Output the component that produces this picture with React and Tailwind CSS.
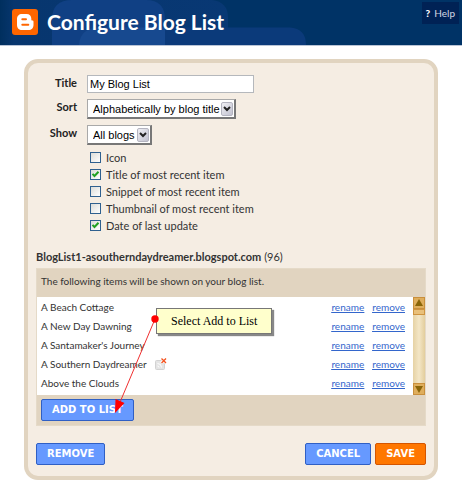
import React, { useState } from 'react';

const displayOptions = [
    { id: 'icon', label: 'Icon', checked: false },
    { id: 'title', label: 'Title of most recent item', checked: true },
    { id: 'snippet', label: 'Snippet of most recent item', checked: false },
    { id: 'thumbnail', label: 'Thumbnail of most recent item', checked: false },
    { id: 'date', label: 'Date of last update', checked: true },
];

const blogs = [
    { name: 'A Beach Cottage' },
    { name: 'A New Day Dawning' },
    { name: "A Santamaker's Journey" },
    { name: 'A Southern Daydreamer', noFeed: true },
    { name: 'Above the Clouds' },
];

const BloggerLogo = () => (
    <svg viewBox="0 0 26 26" className="size-[26px] shrink-0" aria-hidden="true">
        <rect width="26" height="26" rx="3" fill="#ff6600" />
        <path
            d="M10 5h4.500c3 0 4.800 2 4.800 4.600v.7c0 .8.300 1.200 1 1.200.9 0 1.200.4 1.200 1.200v3.300c0 3-2 5-5 5H10c-3 0-5-2-5-5v-6c0-3 2-5 5-5z"
            fill="#fff"
        />
        <path d="M10.300 10.200h3.700M10.300 15.800h6" stroke="#ff6600" strokeWidth="2" strokeLinecap="round" />
    </svg>
);

const HeaderShapes = () => (
    <svg className="absolute inset-0 h-full w-[310px]" viewBox="0 0 310 46" preserveAspectRatio="none" aria-hidden="true">
        <defs>
            <linearGradient id="edge">
                <stop offset="0" stopColor="#002f5e" />
                <stop offset="0.06" stopColor="#07366e" />
                <stop offset="1" stopColor="#083874" />
            </linearGradient>
        </defs>
        <path d="M0 0H212Q228 2 228 18V46H0z" fill="url(#edge)" />
        <path d="M165 28H290Q306 29 306 46H165z" fill="#0b3a7a" />
        <path d="M52 46V20Q52 0 72 0H146Q165 0 165 20V46z" fill="#104084" />
        <path d="M79 46Q80 28 100 28H165V46z" fill="#17498f" />
    </svg>
);

const SelectBox = ({ id, className, children }) => (
    <span className="relative inline-flex justify-self-start">
        <select
            id={id}
            className={`h-5 appearance-none border border-t-[#a9a9a9] border-l-[#a9a9a9] border-r-2 border-b-2 border-r-[#777] border-b-[#777] bg-white pl-[5px] text-[11px] leading-4 text-black ${className}`}
        >
            {children}
        </select>
        <span className="pointer-events-none absolute top-[3px] right-[3px] flex h-3.5 w-3 items-center justify-center rounded-xs border border-[#b4b4c0] bg-linear-to-br from-[#f0f0f4] to-[#c2c2d0]">
            <svg viewBox="0 0 8 6" className="h-[6px] w-2" aria-hidden="true">
                <path d="M1 1l3 3 3-3" fill="none" stroke="#222" strokeWidth="2" />
            </svg>
        </span>
    </span>
);

const CheckOption = ({ option }) => {
    const [checked, setChecked] = useState(option.checked);

    return (
        <div className="flex h-[17px] items-center gap-[5px]">
            <span className="relative flex">
                <input
                    id={option.id}
                    type="checkbox"
                    checked={checked}
                    onChange={() => setChecked(!checked)}
                    className="size-[11px] appearance-none border border-[#2f608f] bg-linear-to-br from-[#dcdcd8] to-white"
                />
                {checked && (
                    <svg viewBox="0 0 11 11" className="pointer-events-none absolute inset-0 size-[11px]" aria-hidden="true">
                        <path d="M2.500 4.800l2 2.200 4-4.200" fill="none" stroke="#21a121" strokeWidth="2" />
                    </svg>
                )}
            </span>
            <label htmlFor={option.id} className="text-[11px]">{option.label}</label>
        </div>
    );
};

const NoFeedIcon = () => (
    <svg viewBox="0 0 12 12" className="size-3" role="img" aria-label="No feed">
        <rect x="0.500" y="2.500" width="9" height="9" rx="1" fill="#e4e4e4" stroke="#d2d2d2" />
        <path d="M2.500 5.500a4 4 0 0 1 4 4M2.500 8a1.500 1.500 0 0 1 1.500 1.500" fill="none" stroke="#fff" />
        <path d="M6 0l5 5M11 0l-5 5" stroke="#fff" strokeWidth="2.500" />
        <path d="M6.500 .5l4.500 4.500M11 .5L6.500 5" stroke="#f4511e" strokeWidth="1.300" />
    </svg>
);

// Wooden scroll bar next to the blog rows
const ScrollBar = () => (
    <div className="flex w-3 shrink-0 flex-col bg-linear-to-r from-[#e6d2a4] via-[#f3e6c6] to-[#e3cd9c]" aria-hidden="true">
        <svg viewBox="0 0 12 18" className="h-[18px] w-3">
            <rect x="0.500" y="0.500" width="11" height="11" fill="#dfae5c" stroke="#c98f3c" />
            <path d="M6 2l4 7H2z" fill="#8a6508" />
            <rect x="0.500" y="12.500" width="11" height="5" fill="#e9c07a" stroke="#cf9440" />
        </svg>
        <div className="grow" />
        <svg viewBox="0 0 12 12" className="size-3">
            <rect x="0.500" y="0.500" width="11" height="11" fill="#dfae5c" stroke="#c98f3c" />
            <path d="M6 10L2 3h8z" fill="#8a6508" />
        </svg>
    </div>
);

const Button = ({ className, children }) => (
    <button
        type="button"
        className={`h-[22px] rounded-xs border px-2.5 font-['DejaVu_Sans',sans-serif] text-[10px] leading-4 font-bold text-white ${className}`}
    >
        {children}
    </button>
);

const blue = 'border-[#2f5fc4] bg-[#6699ff]';
const orange = 'border-[#d45500] bg-[#ff7700]';

const App = () => {
    const [title, setTitle] = useState('My Blog List');

    return (
        <div className="bg-white font-['Lato',sans-serif] text-[10px] leading-4 text-[#333]">
            <header className="relative flex h-[46px] items-start justify-between border-b border-[#b9c4d6] bg-[#003366]">
                <HeaderShapes />
                <div className="relative flex items-center gap-[9px] pt-2 pl-3">
                    <BloggerLogo />
                    <h1 className="text-[21px] leading-7 font-bold text-white">Configure Blog List</h1>
                </div>
                <a href="#help" className="relative mt-0.5 mr-[3px] flex h-[22px] items-center gap-1 bg-[#002255] px-1 text-[#d4d8e4]">
                    <span className="font-black text-white">?</span>
                    Help
                </a>
            </header>

            <main className="mx-6 mt-[13px] rounded-[14px] border-4 border-[#e1d4c0] bg-[#f5ede3] px-2 pt-3 pb-[11px]">
                <form>
                    <div className="grid grid-cols-[41px_1fr] items-start gap-x-2.5 gap-y-1.5">
                        <label htmlFor="list-title" className="text-right text-[11px] font-bold text-[#222]">Title</label>
                        <input
                            id="list-title"
                            type="text"
                            value={title}
                            onChange={(e) => setTitle(e.target.value)}
                            className="h-[18px] w-[167px] border border-[#b5b8bc] bg-white px-0.5 font-['Liberation_Sans',sans-serif] text-[11px] leading-4 text-black"
                        />
                        <label htmlFor="sort" className="text-right text-[11px] font-bold text-[#222]">Sort</label>
                        <SelectBox id="sort" className="w-[149px] font-['Liberation_Sans',sans-serif]">
                            <option>Alphabetically by blog title</option>
                            <option>Most recently updated</option>
                        </SelectBox>
                        <label htmlFor="show" className="text-right text-[11px] font-bold text-[#222]">Show</label>
                        <SelectBox id="show" className="w-[65px] font-['Liberation_Sans',sans-serif]">
                            <option>All blogs</option>
                            <option>5 blogs</option>
                            <option>10 blogs</option>
                        </SelectBox>
                    </div>

                    <div className="mt-1 ml-[54px]">
                        {displayOptions.map((option) => (
                            <CheckOption key={option.id} option={option} />
                        ))}
                    </div>

                    <h2 className="mt-[15px] mb-[3px] text-[11px]">
                        <span className="font-bold">BlogList1-asoutherndaydreamer.blogspot.com</span> (96)
                    </h2>

                    <section className="relative border border-[#e5dac8] bg-[#e1d4c0]">
                        <p className="px-1 pt-1 pb-2">The following items will be shown on your blog list.</p>
                        <div className="flex bg-white">
                            <ul className="grow pr-2 pl-1">
                                {blogs.map((blog) => (
                                    <li key={blog.name} className="flex h-[19px] items-center justify-between last:mb-[3px]">
                                        <span className="flex items-center gap-2">
                                            {blog.name}
                                            {blog.noFeed && <NoFeedIcon />}
                                        </span>
                                        <span className="flex gap-2 text-[#3366cc] underline">
                                            <a href="#rename">rename</a>
                                            <a href="#remove">remove</a>
                                        </span>
                                    </li>
                                ))}
                            </ul>
                            <ScrollBar />
                        </div>
                        <div className="px-1 py-1">
                            <Button className={blue}>ADD TO LIST</Button>
                        </div>

                        {/* Callout pointing at the add button */}
                        <div className="absolute top-[39px] left-[119px] border border-[#777] bg-[#ffffcc] px-3.5 py-0.5 font-['Liberation_Serif',serif] text-[12px] leading-5 text-black shadow-[2px_2px_1px_#888]">
                            Select Add to List
                        </div>
                        <svg viewBox="0 0 50 104" className="pointer-events-none absolute top-[44px] left-[76px] h-[104px] w-[50px]" aria-hidden="true">
                            <path d="M42 6L5 94" stroke="#f03030" strokeWidth="1" />
                            <circle cx="42" cy="6" r="3.700" fill="#ff0000" />
                            <path d="M2 100L2.500 86L11.500 90z" fill="#ff0000" />
                        </svg>
                    </section>

                    <div className="mt-[17px] flex items-center gap-1">
                        <Button className={blue}>REMOVE</Button>
                        <div className="grow" />
                        <Button className={blue}>CANCEL</Button>
                        <Button className={orange}>SAVE</Button>
                    </div>
                </form>
            </main>
        </div>
    );
};

export default App;
